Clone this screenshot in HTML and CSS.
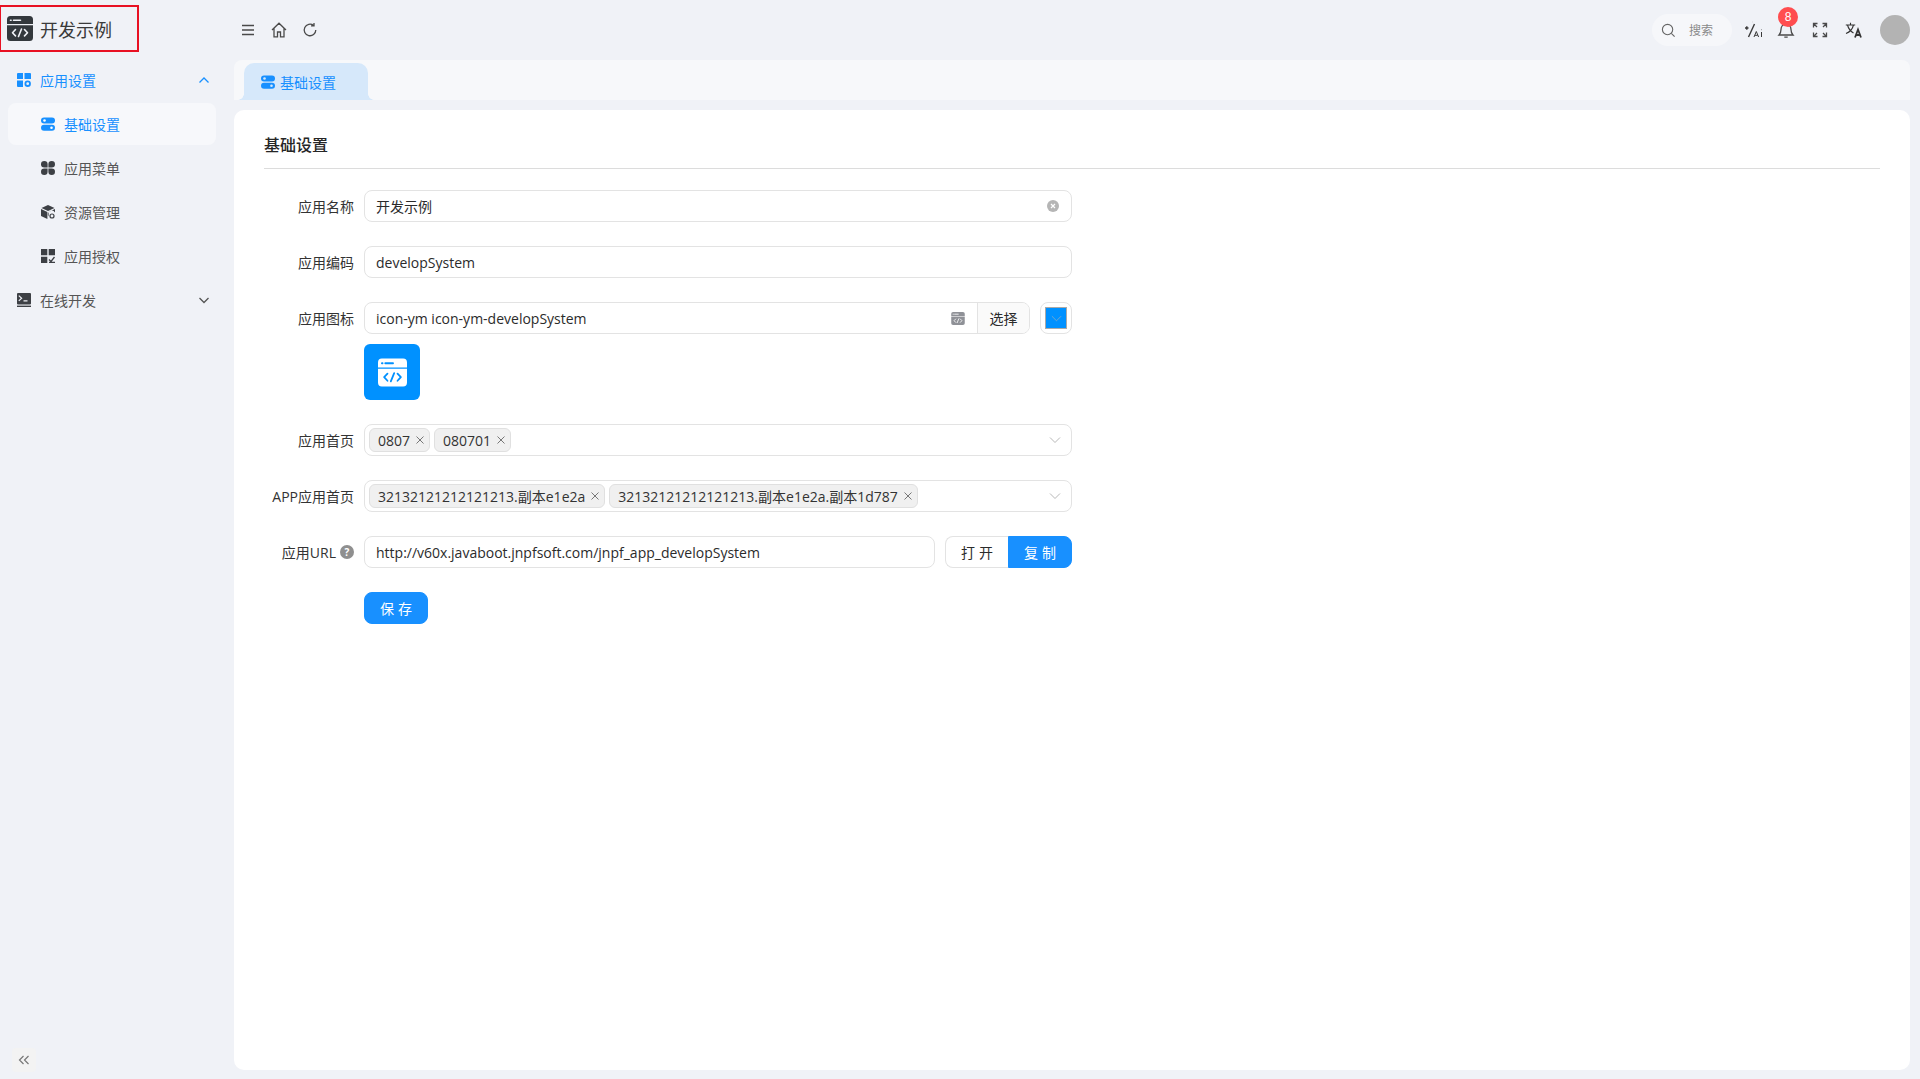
FILE: index.html
```html
<!DOCTYPE html>
<html lang="zh-CN">
<head>
<meta charset="utf-8">
<title>开发示例</title>
<link rel="stylesheet" href="styles.css">
</head>
<body>
<svg class="defs" width="0" height="0" aria-hidden="true">
  <symbol id="dev" viewBox="0 0 26 25">
    <path fill="currentColor" d="M3.5 0h19A3.5 3.5 0 0 1 26 3.5V8H0V3.500A3.500 3.500 0 0 1 3.500 0z"/>
    <path fill="currentColor" d="M0 9.200h26V21.500a3.500 3.500 0 0 1-3.500 3.500h-19A3.500 3.500 0 0 1 0 21.500z"/>
    <path fill="none" stroke="var(--detail)" stroke-width="1.600" stroke-linecap="round" stroke-linejoin="round" d="M3.500 4.200h.6M6.500 4.200h7M8.500 13.500l-3 3.200 3 3.200M17.500 13.500l3 3.200-3 3.200M14.500 13l-3 7.500"/>
  </symbol>
</svg>
<div class="app">
  <aside class="sidebar">
    <div class="logo">
      <svg class="logo-icon"><use href="#dev"/></svg>
      <span class="logo-text">开发示例</span>
    </div>
    <nav class="menu">
      <div class="menu-group active">
        <svg class="i14" viewBox="0 0 14 14"><path fill="currentColor" d="M0 1a1 1 0 0 1 1-1h5v6H0zM7.500 0H13a1 1 0 0 1 1 1v5H7.500zM0 7.500h6V14H1a1 1 0 0 1-1-1z"/><circle cx="10.700" cy="10.700" r="2.300" fill="none" stroke="currentColor" stroke-width="1.800"/></svg>
        <span class="menu-label">应用设置</span>
        <svg class="chev" viewBox="0 0 12 12"><path d="M1.500 8.500 6 4l4.500 4.500"/></svg>
      </div>
      <div class="menu-item selected">
        <svg class="i14" viewBox="0 0 14 14"><rect y="0.500" width="14" height="6" rx="3" fill="currentColor"/><circle cx="3.500" cy="3.500" r="1.300" fill="#fff"/><rect y="7.800" width="14" height="6" rx="3" fill="currentColor"/><circle cx="10.500" cy="10.800" r="1.300" fill="#fff"/></svg>
        <span>基础设置</span>
      </div>
      <div class="menu-item">
        <svg class="i14" viewBox="0 0 14 14"><g fill="currentColor"><path d="M3.300 0a3.300 3.300 0 0 1 3.300 3.300v3.300H3.300a3.300 3.300 0 0 1 0-6.600z"/><path d="M10.700 0a3.300 3.300 0 0 1 0 6.600H7.400V3.300A3.300 3.300 0 0 1 10.700 0z"/><path d="M3.300 7.400h3.300v3.300a3.300 3.300 0 1 1-3.300-3.300z"/><path d="M7.400 7.400h3.300a3.300 3.300 0 1 1-3.300 3.300z"/></g></svg>
        <span>应用菜单</span>
      </div>
      <div class="menu-item">
        <svg class="i14" viewBox="0 0 14 14"><path fill="currentColor" d="M7 0l6.500 3L7 6 .5 3zM0 4l6.400 3v7L0 11zM7.600 7 14 4v3.500a3.500 3.500 0 0 0-6.400 4z"/><circle cx="11" cy="11" r="2" fill="none" stroke="currentColor" stroke-width="1.200"/></svg>
        <span>资源管理</span>
      </div>
      <div class="menu-item">
        <svg class="i14" viewBox="0 0 14 14"><path fill="currentColor" d="M0 0h6.300v6.300H0zM7.700 0H14v6.300H7.700zM0 7.700h6.300V14H0z"/><path fill="none" stroke="currentColor" stroke-width="1.300" d="M8 10.500l2 2 3.500-4.500M8 13.500h6"/></svg>
        <span>应用授权</span>
      </div>
      <div class="menu-group">
        <svg class="i14" viewBox="0 0 14 14"><path fill="currentColor" fill-rule="evenodd" d="M1 0h12a1 1 0 0 1 1 1v9.500a1 1 0 0 1-1 1H1a1 1 0 0 1-1-1V1a1 1 0 0 1 1-1zm1.200 2.300-.8.800 2.400 2.200-2.400 2.200.8.800 3.300-3zM6.500 7.300v1.100h4V7.300z"/><path fill="currentColor" d="M0 12.600h14V14H0z"/></svg>
        <span class="menu-label">在线开发</span>
        <svg class="chev" viewBox="0 0 12 12"><path d="M1.500 4 6 8.500 10.500 4"/></svg>
      </div>
    </nav>
    <button class="collapse" type="button" aria-label="收起">
      <svg viewBox="0 0 12 12"><path d="M5.500 2 1.500 6l4 4M10.500 2l-4 4 4 4"/></svg>
    </button>
  </aside>

  <div class="main">
    <header class="topbar">
      <div class="tools">
        <svg class="ti" viewBox="0 0 16 16"><path d="M2 3.500h12M2 8h12M2 12.500h12"/></svg>
        <svg class="ti home" viewBox="0 0 16 16"><path d="M1 8 8 1.200 15 8M3 6.500V14.800h3.500V10h3v4.800H13V6.500"/></svg>
        <svg class="ti" viewBox="0 0 16 16"><path d="M13.800 8A5.800 5.800 0 1 1 11.600 3.400M12 .9v3h-3"/></svg>
      </div>
      <div class="actions">
        <div class="search">
          <svg viewBox="0 0 16 16"><circle cx="7" cy="7" r="5.500"/><path d="m11 11 3.500 3.500"/></svg>
          <span>搜索</span>
        </div>
        <svg class="ti ai" viewBox="0 0 20 18"><path d="M10.500 3 4.500 16M1 7h3.500M2.800 5.300v3.400M8 1h.1"/><path class="thin" d="m10 16 2.300-5.500 2.300 5.500M11 14.300h2.600M17.500 11v5M17.500 8.600v.5"/></svg>
        <div class="bell">
          <svg class="ti" viewBox="0 0 18 18"><path d="M2 14h14c-1.500-1.500-2-2.500-2-5.500 0-3-2-5.500-5-5.500S4 5.500 4 8.500c0 3-.5 4-2 5.500zM7.300 16.200h3.400"/></svg>
          <span class="badge">8</span>
        </div>
        <svg class="ti expand" viewBox="0 0 16 16"><path d="M1.500 5.500v-4h4M1.500 1.500l3.500 3.500M14.500 5.500v-4h-4M14.500 1.500 11 5M1.500 10.500v4h4M1.500 14.500 5 11M14.500 10.500v4h-4M14.500 14.500 11 11"/></svg>
        <svg class="ti lang" viewBox="0 0 18 16"><path d="M.8 3h9.400M5.500.8V3M8.500 3C7.500 7 5 10 1 11.500M2.500 3C3.500 7 6 9.500 8.500 11"/><path class="bold" d="m10 15.500 3-8 3 8M11 13h4"/></svg>
        <div class="avatar"></div>
      </div>
    </header>

    <div class="tabbar">
      <div class="tab">
        <svg class="i14" viewBox="0 0 14 14"><rect y="0.500" width="14" height="6" rx="3" fill="currentColor"/><circle cx="3.500" cy="3.500" r="1.300" fill="#d6e8fa"/><rect y="7.800" width="14" height="6" rx="3" fill="currentColor"/><circle cx="10.500" cy="10.800" r="1.300" fill="#d6e8fa"/></svg>
        <span>基础设置</span>
      </div>
    </div>

    <main class="card">
      <h2 class="card-title">基础设置</h2>
      <form class="form">
        <div class="row">
          <label class="label">应用名称</label>
          <div class="field input">
            <span class="value">开发示例</span>
            <svg class="clear" viewBox="0 0 12 12"><circle cx="6" cy="6" r="6" fill="#b5b5b5"/><path d="m4 4 4 4M8 4l-4 4" stroke="#fff" stroke-width="1.200"/></svg>
          </div>
        </div>
        <div class="row">
          <label class="label">应用编码</label>
          <div class="field input"><span class="value">developSystem</span></div>
        </div>
        <div class="row icon-row">
          <label class="label">应用图标</label>
          <div class="field-wrap">
            <div class="icon-line">
              <div class="field input grouped">
                <span class="value">icon-ym icon-ym-developSystem</span>
                <svg class="suffix-icon"><use href="#dev"/></svg>
                <span class="addon">选择</span>
              </div>
              <div class="color-picker"><span class="swatch"><svg viewBox="0 0 12 12"><path d="M1 3.500 6 8.500l5-5"/></svg></span></div>
            </div>
            <div class="app-icon"><svg><use href="#dev"/></svg></div>
          </div>
        </div>
        <div class="row">
          <label class="label">应用首页</label>
          <div class="field select">
            <span class="tag">0807<svg viewBox="0 0 10 10"><path d="m1.500 1.500 7 7M8.500 1.500l-7 7"/></svg></span>
            <span class="tag">080701<svg viewBox="0 0 10 10"><path d="m1.500 1.500 7 7M8.500 1.500l-7 7"/></svg></span>
            <svg class="arrow" viewBox="0 0 12 12"><path d="M1 3.500 6 8.500l5-5"/></svg>
          </div>
        </div>
        <div class="row">
          <label class="label">APP应用首页</label>
          <div class="field select">
            <span class="tag">32132121212121213.副本e1e2a<svg viewBox="0 0 10 10"><path d="m1.500 1.500 7 7M8.500 1.500l-7 7"/></svg></span>
            <span class="tag">32132121212121213.副本e1e2a.副本1d787<svg viewBox="0 0 10 10"><path d="m1.500 1.500 7 7M8.500 1.500l-7 7"/></svg></span>
            <svg class="arrow" viewBox="0 0 12 12"><path d="M1 3.500 6 8.500l5-5"/></svg>
          </div>
        </div>
        <div class="row">
          <label class="label">应用URL<span class="help">?</span></label>
          <div class="url-line">
            <div class="field input"><span class="value">http://v60x.javaboot.jnpfsoft.com/jnpf_app_developSystem</span></div>
            <div class="btn-group">
              <button class="btn" type="button">打开</button>
              <button class="btn primary" type="button">复制</button>
            </div>
          </div>
        </div>
        <div class="row">
          <span class="label"></span>
          <button class="btn primary save" type="button">保存</button>
        </div>
      </form>
    </main>
  </div>
</div>
</body>
</html>
```
FILE: styles.css
```css
* { box-sizing: border-box; }
html, body { margin: 0; height: 100%; overflow: hidden; }
body {
  font-family: "Open Sans", "Noto Sans CJK SC", sans-serif;
  font-size: 14px;
  color: #2b2b2b;
  background: #f0f2f7;
}
.defs { position: absolute; }
.app { display: flex; height: 1079px; }

/* sidebar */
.sidebar { width: 234px; flex: none; display: flex; flex-direction: column; }
.logo {
  margin-top: 5px; width: 139px; height: 47px;
  border: 2px solid #e81123; border-left-width: 1px;
  display: flex; align-items: center; gap: 7px; padding: 0 0 0 6px;
}
.logo-icon { width: 26px; height: 25px; color: #33383d; --detail: #f0f2f7; flex: none; }
.logo-text { font-size: 18px; color: #3a3a3a; }
.menu { margin-top: 7px; display: flex; flex-direction: column; gap: 2px; }
.menu-group, .menu-item {
  height: 42px; display: flex; align-items: center; color: #555; 
}
.menu-group { padding: 0 12px 0 17px; gap: 9px; }
.menu-item { margin: 0 18px 0 8px; padding-left: 33px; gap: 9px; border-radius: 8px; }
.menu-label { flex: 1; }
.active { color: #1890ff; }
.selected { color: #1890ff; background: #f7f8fb; }
.i14 { width: 14px; height: 14px; flex: none; }
.menu-item .i14 { color: #3d4045; }
.menu-item.selected .i14 { color: #1890ff; }
.menu-group .i14 { color: #3d4045; }
.menu-group.active .i14 { color: #1890ff; }
.chev { width: 12px; height: 12px; fill: none; stroke: currentColor; stroke-width: 1.300; margin-right: 12px; }
.collapse {
  margin: auto 0 7px 12px; width: 24px; height: 24px; padding: 6px;
  border: 0; background: #f3f3f3; border-radius: 4px; display: flex;
}
.collapse svg { width: 12px; height: 12px; fill: none; stroke: #777; stroke-width: 1.200; }

/* main column */
.main { flex: 1; min-width: 0; padding-right: 10px; display: flex; flex-direction: column; }
.topbar { height: 60px; flex: none; display: flex; align-items: center; justify-content: space-between; padding-right: 0; margin-right: 0; }
.tools { display: flex; align-items: center; gap: 15px; padding-left: 6px; }
.ti { width: 16px; height: 16px; fill: none; stroke: #4a4a4a; stroke-width: 1.300; flex: none; }
.actions { display: flex; align-items: center; }
.search {
  width: 80px; height: 32px; border-radius: 16px; background: #f6f7fa;
  display: flex; align-items: center; gap: 13px; padding-left: 9px; color: #8a8a8a; font-size: 12px;
}
.search svg { width: 15px; height: 15px; flex: none; fill: none; stroke: #666; stroke-width: 1.200; }
.ai { width: 20px; height: 18px; margin-left: 12px; stroke: #3a3a3a; stroke-width: 1.400; }
.ai .thin { stroke-width: 1; }
.bell { position: relative; width: 18px; height: 18px; margin-left: 13px; }
.bell .ti { width: 18px; height: 18px; }
.badge {
  position: absolute; left: 1px; top: -23px; margin-left: 0; width: 20px; height: 20px;
  transform: translate(0, 9px);
  border-radius: 50%; background: #ff4d4f; color: #fff; font-size: 12px;
  display: flex; align-items: center; justify-content: center; font-family: "Liberation Sans", sans-serif;
}
.expand { margin-left: 17px; }
.lang { width: 18px; margin-left: 17px; stroke: #333; stroke-width: 1.100; }
.lang .bold { stroke-width: 1.800; }
.avatar { width: 30px; height: 30px; border-radius: 50%; background: #b3b3b3; margin-left: 17px; margin-right: 0; }

/* tabs */
.tabbar { height: 40px; flex: none; background: #f7f8fa; border-radius: 8px 8px 0 0; padding: 3px 0 0 10px; display: flex; }
.tab {
  position: relative; width: 124px; height: 37px; background: #d6e8fa; color: #1890ff;
  border-radius: 10px 10px 0 0; display: flex; align-items: center; gap: 5px; padding-left: 17px;
}
.tab::before, .tab::after {
  content: ""; position: absolute; bottom: 0; width: 6px; height: 6px;
  background: radial-gradient(circle at 0 0, transparent 5.500px, #d6e8fa 6px);
}
.tab::before { left: -6px; }
.tab::after { right: -6px; transform: scaleX(-1); }

/* card */
.card { flex: 1; margin: 10px 0 9px; background: #fff; border-radius: 10px; padding: 0 30px; }
.card-title {
  margin: 0; height: 59px; line-height: 70px; font-size: 16px; font-weight: 500; color: #262626;
  border-bottom: 1px solid #dcdcdc;
}
.form { padding-top: 21px; display: flex; flex-direction: column; gap: 24px; }
.row { display: flex; gap: 10px; }
.label {
  width: 90px; flex: none; height: 32px; display: flex; align-items: center; justify-content: flex-end;
  color: #333; white-space: nowrap;
}
.help {
  width: 14px; height: 14px; border-radius: 50%; background: #8f8f8f; color: #fff; font-size: 10px;
  margin-left: 4px; display: flex; align-items: center; justify-content: center; font-weight: 700;
}
.field {
  width: 708px; height: 32px; background: #fff; border: 1px solid #e3e3e3; border-radius: 8px;
  display: flex; align-items: center;
}
.input { padding-left: 11px; justify-content: space-between; }
.value { color: #2b2b2b; }
.clear { width: 12px; height: 12px; margin-right: 12px; }

.field-wrap { display: flex; flex-direction: column; gap: 10px; }
.icon-line { display: flex; gap: 10px; }
.grouped { width: 666px; padding-right: 0; overflow: hidden; }
.grouped .value { flex: 1; }
.suffix-icon { width: 14px; height: 13px; color: #8f9197; --detail: #fff; margin-right: 12px; flex: none; }
.addon {
  width: 52px; height: 30px; background: #fafafa; border-left: 1px solid #e3e3e3;
  display: flex; align-items: center; justify-content: center; color: #2b2b2b;
}
.color-picker { width: 32px; height: 32px; border: 1px solid #e3e3e3; border-radius: 8px; padding: 4px; }
.swatch { display: flex; align-items: center; justify-content: center; width: 22px; height: 22px; background: #0091ff; border: 1px solid #a9a9a9; }
.swatch svg { width: 11px; height: 11px; fill: none; stroke: #7aa7c9; stroke-width: 1; }
.app-icon {
  width: 56px; height: 56px; border-radius: 6px; background: #0091ff;
  display: flex; align-items: center; justify-content: center; color: #fff; --detail: #0091ff;
}
.app-icon svg { width: 29px; height: 29px; }

.select { padding: 0 10px 0 4px; gap: 4px; position: relative; }
.tag {
  height: 24px; display: inline-flex; align-items: center; gap: 5px; padding: 0 4px 0 8px;
  background: #f0f0f0; border: 1px solid #e0e0e0; border-radius: 6px; color: #333; white-space: nowrap;
}
.tag svg { width: 10px; height: 10px; fill: none; stroke: #777; stroke-width: 1; flex: none; }
.arrow { margin-left: auto; width: 12px; height: 12px; fill: none; stroke: #b8b8b8; stroke-width: 1; flex: none; }

.url-line { display: flex; gap: 10px; width: 708px; }
.url-line .field { width: 571px; flex: none; }
.btn-group { display: flex; flex: 1; }
.btn {
  height: 32px; border: 1px solid #e3e3e3; background: #fff; color: #2b2b2b; font: inherit;
  letter-spacing: 4px; text-indent: 4px; padding: 0; flex: 1;
}
.btn-group .btn:first-child { border-radius: 8px 0 0 8px; border-right: 0; }
.btn-group .btn:last-child { border-radius: 0 8px 8px 0; }
.btn.primary { background: #1890ff; border-color: #1890ff; color: #fff; }
.save { width: 64px; flex: none; border-radius: 8px; }
```
